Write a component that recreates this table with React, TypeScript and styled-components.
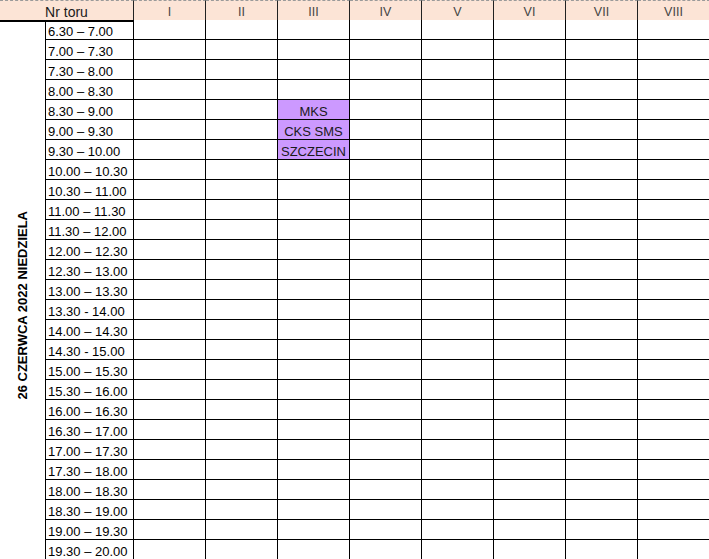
import React from "react";
import styled, { createGlobalStyle } from "styled-components";

const Global = createGlobalStyle`
  html, body { margin: 0; padding: 0; background: #ffffff; overflow: hidden; }
  body { font-family: "Liberation Sans", Arial, sans-serif; }
`;

const Sheet = styled.div`
  display: grid;
  grid-template-columns: 46px 88px repeat(8, 72px);
  grid-auto-rows: 20px;
  width: 710px;
  font-family: "Liberation Sans", Arial, sans-serif;
  color: #000;
`;

const HeadCell = styled.div<{ $span?: number; $big?: boolean }>`
  grid-column: span ${(p) => p.$span ?? 1};
  height: 22px;
  box-sizing: border-box;
  background: #fce4d6;
  border-top: 1px dashed #9a9a9a;
  border-bottom: 2px solid #000;
  border-right: 1px solid #222;
  padding-top: 2px;
  line-height: 19px;
  text-align: center;
  font-size: ${(p) => (p.$big ? "14px" : "12.5px")};
  color: ${(p) => (p.$big ? "#1a1a1a" : "#444")};
  white-space: nowrap;
  overflow: hidden;
`;

const DateCell = styled.div<{ $rows: number }>`
  grid-column: 1;
  grid-row: 2 / span ${(p) => p.$rows};
  box-sizing: border-box;
  border-right: 1px solid #000;
  display: flex;
  align-items: center;
  justify-content: center;
  padding-top: 30px;
`;

const DateText = styled.span`
  writing-mode: vertical-rl;
  transform: rotate(180deg);
  font-weight: 700;
  font-size: 13px;
  white-space: nowrap;
  color: #000;
`;

const TimeCell = styled.div`
  height: 20px;
  box-sizing: border-box;
  border-right: 1px solid #000;
  border-bottom: 1px solid #000;
  padding: 4px 0 0 2px;
  line-height: 15px;
  font-size: 13px;
  white-space: nowrap;
  overflow: hidden;
`;

const SlotCell = styled.div<{ $filled?: boolean }>`
  height: 20px;
  box-sizing: border-box;
  border-right: 1px solid #000;
  border-bottom: 1px solid #000;
  background: ${(p) => (p.$filled ? "#cc99ff" : "#ffffff")};
  padding-top: 4px;
  line-height: 15px;
  font-size: 13px;
  text-align: center;
  color: #1a1a1a;
  white-space: nowrap;
  overflow: hidden;
`;

const lanes = ["I", "II", "III", "IV", "V", "VI", "VII", "VIII"];

const times = [
  "6.30 – 7.00",
  "7.00 – 7.30",
  "7.30 – 8.00",
  "8.00 – 8.30",
  "8.30 – 9.00",
  "9.00 – 9.30",
  "9.30 – 10.00",
  "10.00 – 10.30",
  "10.30 – 11.00",
  "11.00 – 11.30",
  "11.30 – 12.00",
  "12.00 – 12.30",
  "12.30 – 13.00",
  "13.00 – 13.30",
  "13.30 - 14.00",
  "14.00 – 14.30",
  "14.30 - 15.00",
  "15.00 – 15.30",
  "15.30 – 16.00",
  "16.00 – 16.30",
  "16.30 – 17.00",
  "17.00 – 17.30",
  "17.30 – 18.00",
  "18.00 – 18.30",
  "18.30 – 19.00",
  "19.00 – 19.30",
  "19.30 – 20.00",
];

const bookings: Record<string, string> = {
  "4-2": "MKS",
  "5-2": "CKS SMS",
  "6-2": "SZCZECIN",
};

export default function App() {
  return (
    <>
      <Global />
      <Sheet>
        <HeadCell $span={2} $big>
          Nr toru
        </HeadCell>
        {lanes.map((l) => (
          <HeadCell key={l}>{l}</HeadCell>
        ))}
        <DateCell $rows={times.length}>
          <DateText>26 CZERWCA 2022 NIEDZIELA</DateText>
        </DateCell>
        {times.map((t, r) => (
          <React.Fragment key={t}>
            <TimeCell>{t}</TimeCell>
            {lanes.map((l, c) => {
              const b = bookings[`${r}-${c}`];
              return (
                <SlotCell key={l} $filled={!!b}>
                  {b}
                </SlotCell>
              );
            })}
          </React.Fragment>
        ))}
      </Sheet>
    </>
  );
}
